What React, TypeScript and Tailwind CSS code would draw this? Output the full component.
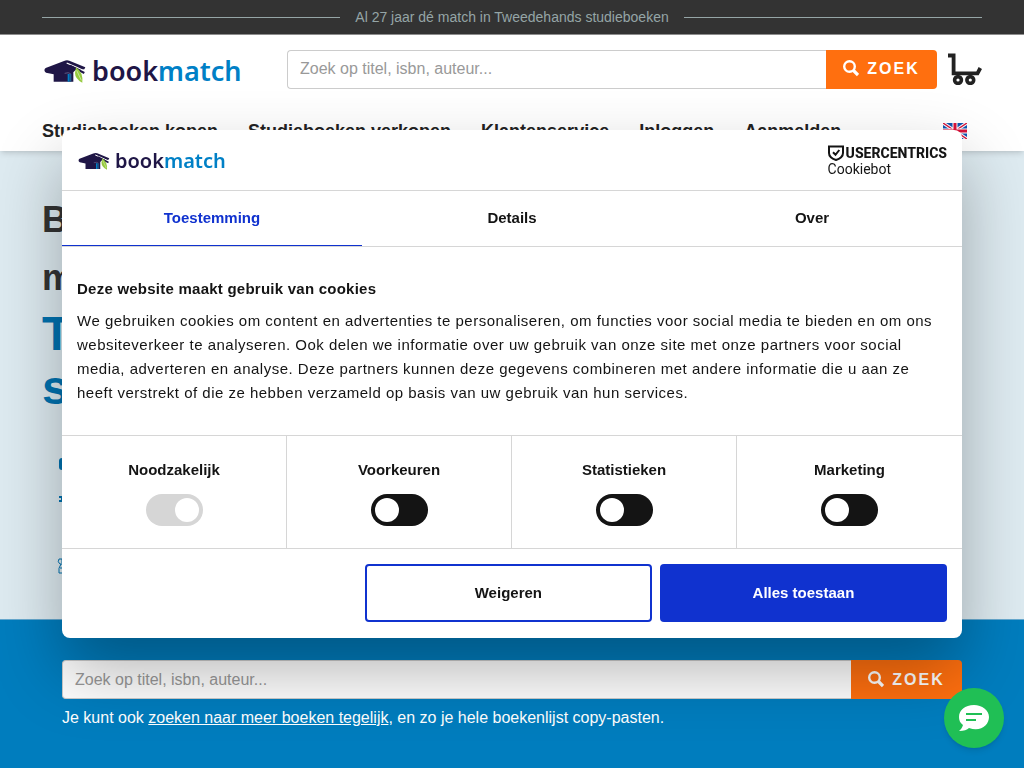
const navItems = ['Studieboeken kopen', 'Studieboeken verkopen', 'Klantenservice', 'Inloggen', 'Aanmelden'];

const categories = [
  { id: 'necessary', label: 'Noodzakelijk', required: true },
  { id: 'preferences', label: 'Voorkeuren', required: false },
  { id: 'statistics', label: 'Statistieken', required: false },
  { id: 'marketing', label: 'Marketing', required: false },
];

function GraduationHat({ className }: { className: string }) {
  return (
    <svg viewBox="0 0 126 72" className={className} aria-hidden="true">
      <path d="M5 27 L60 6 Q68 2 76 5 L124 25 L121 31 L108 33 L98 30 L88 40 L88 68 L29 68 L29 46 L6 41 Q-3 34 5 27Z" fill="#1f1646" />
      <path d="M68 12 L96 24 L122 36" stroke="#fff" strokeWidth="4" fill="none" />
      <path d="M78 20 L121 42" stroke="#1f1646" strokeWidth="6" />
      <path d="M62 43 Q74 39 80 44" stroke="#7d78a0" strokeWidth="2" fill="none" />
      <path d="M71 45 H77 V68 H71Z" fill="#0080c6" />
      <path d="M77 45 H82 V68 H77Z" fill="#1b5c92" />
      <path d="M96 25 Q118 40 115 71 Q93 60 93 42Z" fill="#95c93d" />
      <path d="M98 34 L112 64" stroke="#e4f2c4" strokeWidth="2" />
    </svg>
  );
}

function SearchIcon() {
  return (
    <svg viewBox="0 0 16 18" className="h-[18px] w-4" aria-hidden="true">
      <circle cx="6.5" cy="6.5" r="5.3" fill="none" stroke="currentColor" strokeWidth="2.4" />
      <path d="M10.5 10.5 L15 15" stroke="currentColor" strokeWidth="3.2" />
    </svg>
  );
}

function CartIcon() {
  return (
    <svg viewBox="0 0 34 32" className="h-8 w-[34px]" fill="none" stroke="#222" aria-hidden="true">
      <path d="M0 2.5 H5.6 V20.3 H29.5 L32.3 15" strokeWidth="3.8" />
      <circle cx="10" cy="27" r="3.4" strokeWidth="3.6" />
      <circle cx="22.3" cy="27" r="3.4" strokeWidth="3.6" />
    </svg>
  );
}

function BritishFlag() {
  return (
    <svg viewBox="0 0 24 16" className="h-4 w-6" role="img" aria-label="English">
      <path d="M0 0H24V16H0Z" fill="#1155b0" />
      <path d="M0 0 24 16M24 0 0 16" stroke="#fff" strokeWidth="3.4" />
      <path d="M0 0 24 16M24 0 0 16" stroke="#d8133a" strokeWidth="1.4" />
      <path d="M12 0V16M0 8H24" stroke="#fff" strokeWidth="5" />
      <path d="M12 0V16M0 8H24" stroke="#d8133a" strokeWidth="3" />
    </svg>
  );
}

function SearchForm() {
  return (
    <form className="flex h-[39px] min-w-0 flex-1">
      <input
        type="text"
        aria-label="Zoek op titel, isbn, auteur"
        placeholder="Zoek op titel, isbn, auteur..."
        className="min-w-0 flex-1 rounded-l border border-r-0 border-[#ccc] bg-white px-3 text-base placeholder:text-[#999]"
      />
      <button type="button" className="flex w-[111px] items-center justify-center gap-2 rounded-r bg-[#ff6f0f] font-bold text-white">
        <SearchIcon />
        <span className="tracking-[2px]">ZOEK</span>
      </button>
    </form>
  );
}

function CookieDialog() {
  return (
    <div className="pointer-events-none fixed inset-0 flex items-center justify-center">
      <div
        role="dialog"
        aria-label="Cookies"
        className="pointer-events-auto w-full max-w-[900px] overflow-hidden rounded-lg bg-white text-[15px] text-[#141414] shadow-[0_32px_68px_rgba(0,0,0,0.3)]"
      >
        <div className="flex h-[61px] items-center justify-between border-b border-[#d6d6d6] pr-[15px] pl-4">
          <div className="flex items-center gap-[5px] pt-0.5">
            <GraduationHat className="h-[18px] w-8" />
            <span className="font-['Noto_Sans'] text-[20px] leading-6 font-semibold text-[#1f1646]">
              book<span className="text-[#0080c6]">match</span>
            </span>
          </div>
          <div className="pt-0.5">
            <div className="flex items-center gap-0.5">
              <svg viewBox="0 0 16 16" className="h-4 w-4" fill="none" stroke="#141414" aria-hidden="true">
                <path d="M1 1.5H15V8C15 11.5 11 14 8 15C5 14 1 11.5 1 8Z" strokeWidth="2" />
                <path d="M5 7.3 7.5 9.8 11.3 5" strokeWidth="2" />
              </svg>
              <span className="font-['Roboto'] text-sm leading-4 font-extrabold">USERCENTRICS</span>
            </div>
            <div className="font-['Roboto'] text-sm leading-4">Cookiebot</div>
          </div>
        </div>

        <div role="tablist" className="grid h-14 grid-cols-3 border-b border-[#d6d6d6] font-bold">
          <button type="button" role="tab" aria-selected="true" className="border-b border-[#1032cf] text-[#1032cf]">Toestemming</button>
          <button type="button" role="tab" aria-selected="false">Details</button>
          <button type="button" role="tab" aria-selected="false">Over</button>
        </div>

        <div className="px-[15px] py-[30px] leading-6">
          <h2 className="mb-2 font-bold tracking-[0.016em]">Deze website maakt gebruik van cookies</h2>
          <p className="tracking-[0.033em]">
            We gebruiken cookies om content en advertenties te personaliseren, om functies voor social media te bieden en om ons
            websiteverkeer te analyseren. Ook delen we informatie over uw gebruik van onze site met onze partners voor social
            media, adverteren en analyse. Deze partners kunnen deze gegevens combineren met andere informatie die u aan ze heeft
            verstrekt of die ze hebben verzameld op basis van uw gebruik van hun services.
          </p>
        </div>

        <div className="grid h-[114px] grid-cols-4 divide-x divide-[#d6d6d6] border-y border-[#d6d6d6]">
          {categories.map((item) => (
            <div key={item.id} className="flex flex-col items-center gap-3 pt-[22px]">
              <label htmlFor={item.id} className="leading-6 font-bold">{item.label}</label>
              <input
                id={item.id}
                type="checkbox"
                defaultChecked={item.required}
                disabled={item.required}
                className="h-8 w-[57px] appearance-none rounded-full bg-[#141414] p-1 before:block before:h-6 before:w-6 before:rounded-full before:bg-white checked:before:ml-auto disabled:bg-[#d6d6d6]"
              />
            </div>
          ))}
        </div>

        <div className="flex justify-end gap-2 px-[15px] pt-[15px] pb-4 font-bold">
          <button type="button" className="h-[58px] w-[33%] rounded border-2 border-[#1032cf]">Weigeren</button>
          <button type="button" className="h-[58px] w-[33%] rounded bg-[#1032cf] text-white">Alles toestaan</button>
        </div>
      </div>
    </div>
  );
}

export default function App() {
  return (
    <div className="flex h-screen flex-col overflow-hidden bg-[#deebf1] font-['Liberation_Sans',Arial,sans-serif] text-[#222]">
      <div className="flex h-[35px] items-center gap-[15px] border-b border-[#8e8e8e] bg-[#333] px-[42px] text-sm text-[#95a5a6]">
        <span className="h-px flex-1 bg-[#95a5a6]" />
        <p>Al 27 jaar dé match in Tweedehands studieboeken</p>
        <span className="h-px flex-1 bg-[#95a5a6]" />
      </div>

      <header className="h-[116px] shrink-0 bg-white px-[42px] pt-3.5 shadow-md">
        <div className="flex items-center">
          <a href="#" className="flex w-[245px] items-center gap-1.5 pt-1 pl-0.5">
            <GraduationHat className="h-6 w-[42px]" />
            <span className="font-['Noto_Sans'] text-[27px] leading-9 font-semibold text-[#1f1646]">
              book<span className="text-[#0080c6]">match</span>
            </span>
          </a>
          <SearchForm />
          <a href="#" aria-label="Winkelwagen" className="ml-[11px]">
            <CartIcon />
          </a>
        </div>
        <nav className="mt-7 flex items-center justify-between pr-[15px]">
          <div className="flex gap-[30px] text-lg font-bold">
            {navItems.map((item) => (
              <a key={item} href="#">{item}</a>
            ))}
          </div>
          <a href="#">
            <BritishFlag />
          </a>
        </nav>
      </header>

      <main className="flex flex-1 flex-col">
        <section className="h-[468px] px-[42px] pt-10">
          <h1 className="text-4xl leading-[58px] font-bold text-[#333]">
            <span className="block">Bookmatch:</span>
            <span className="block">marktplaats voor</span>
            <span className="block text-5xl leading-[54px] text-[#0072b0]">Tweedehands</span>
            <span className="block text-5xl leading-[54px] text-[#0072b0]">studieboeken</span>
          </h1>
          <div className="mt-10 flex flex-col items-start pl-[15px] text-[#0072b0]">
            <svg viewBox="0 0 20 20" className="h-5 w-5" fill="currentColor" aria-hidden="true">
              <path d="M5 3H17V15H5Q2 15 2 12V6Q2 3 5 3Z" />
            </svg>
            <svg viewBox="0 0 20 20" className="mt-4 h-5 w-5" fill="currentColor" aria-hidden="true">
              <path d="M2 5H18V7H2ZM2 9H18V11H2ZM4 5H16V11H4Z" />
            </svg>
            <svg viewBox="0 0 16 16" className="mt-[47px] h-4 w-4" fill="none" stroke="currentColor" aria-hidden="true">
              <path d="M12 1H2Q0 4 3 6H12M4 6Q1 10 2 15H12M3 10H12M5 1V5" />
            </svg>
          </div>
        </section>

        <section className="flex-1 border-t border-[#66a9cf] bg-[#007dbe] px-[62px] pt-10 text-white">
          <div className="flex text-[#222]">
            <SearchForm />
          </div>
          <p className="mt-[7px] leading-6">
            Je kunt ook <a href="#" className="underline">zoeken naar meer boeken tegelijk</a>, en zo je hele boekenlijst copy-pasten.
          </p>
        </section>
      </main>

      <CookieDialog />

      <button type="button" aria-label="Chat" className="fixed right-5 bottom-5 flex h-[60px] w-[60px] items-center justify-center rounded-full bg-[#20bf55] shadow-md">
        <svg viewBox="0 0 32 28" className="h-7 w-8" aria-hidden="true">
          <path d="M16 1C7 1 1 6 1 13C1 16 2 19 5 21C4 24 3 25 1 27C6 27 9 26 11 24C23 28 31 21 31 13C31 6 24 1 16 1Z" fill="#fff" />
          <path d="M8 10H24M8 16H18" stroke="#20bf55" strokeWidth="2" />
        </svg>
      </button>
    </div>
  );
}
